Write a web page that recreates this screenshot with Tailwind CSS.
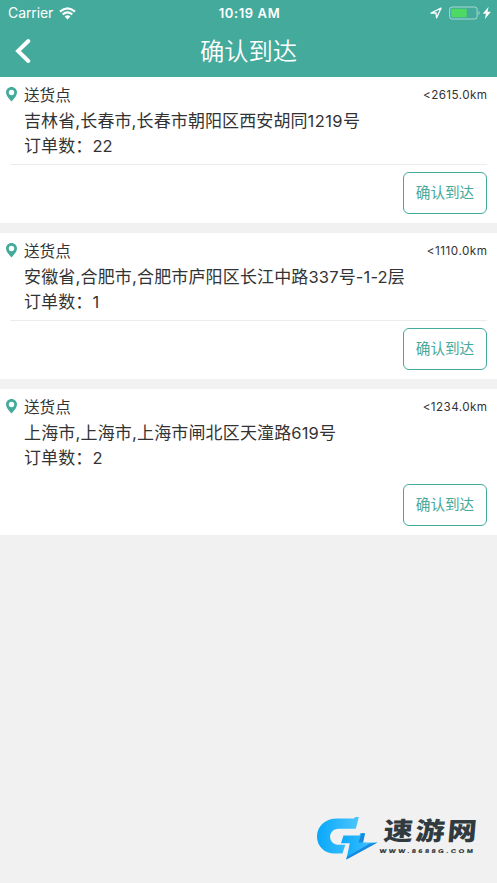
<!DOCTYPE html>
<html lang="zh-CN">
<head>
<meta charset="utf-8">
<title>确认到达</title>
<script src="https://cdn.jsdelivr.net/npm/@tailwindcss/browser@4"></script>
</head>
<body class="bg-[#f1f1f1]">
<div class="relative w-[497px] h-[883px] overflow-hidden bg-[#f1f1f1] font-['Inter','Noto_Sans_CJK_SC',sans-serif] text-[#333]">
  <header class="h-[77px] bg-[#43aa9c] text-white">
    <div class="h-[26px] grid grid-cols-3 items-center pl-2 pr-[6px]">
      <div class="flex items-center gap-[7px]">
        <span class="text-[14px] leading-[26px] tracking-[-0.1px]">Carrier</span>
        <svg class="w-[17px] h-[13px] -ml-px" viewBox="0 0 17 13" fill="none" stroke="#fff" stroke-width="2.3"><path d="M1 4.6Q8.5-1.8 16 4.6M3.7 7.5Q8.5 3.3 13.3 7.5"/><path d="M5.6 9.5Q8.5 7 11.4 9.5L8.5 12.4Z" fill="#fff" stroke="none"/></svg>
      </div>
      <div class="text-center text-[13px] leading-[26px] font-semibold tracking-[0.6px] whitespace-nowrap">10:19 AM</div>
      <div class="flex items-center justify-end">
        <svg class="w-[12px] h-[12px] mr-[7px]" viewBox="0 0 12 12"><path d="M1 6L11 1.2L6.6 10.8L6 6Z" fill="none" stroke="#fff" stroke-width="1.3" stroke-linejoin="round"/></svg>
        <svg class="w-[42px] h-[14px]" viewBox="0 0 42 14"><rect x=".6" y="1" width="27.5" height="12" rx="2.5" fill="none" stroke="#fff" stroke-opacity=".55"/><rect x="2.2" y="2.7" width="15.6" height="8.6" rx="1" fill="#4cd964"/><path d="M29.5 5Q32 7 29.5 9Z" fill="#fff" fill-opacity=".55"/><path d="M39.6 .8L33.8 7.8H37L35.8 13.2L41.8 5.8H38.5Z" fill="#fff"/></svg>
      </div>
    </div>
    <div class="h-[50px] grid grid-cols-[60px_1fr_60px] items-center">
      <svg class="w-[16px] h-[26px] ml-[15px]" viewBox="0 0 16 26"><path d="M13.3 3L3 13L13.3 23" fill="none" stroke="#fff" stroke-width="3.9" stroke-linecap="round" stroke-linejoin="miter"/></svg>
      <h1 class="text-center text-[24.3px] leading-[50px] font-[350]">确认到达</h1>
    </div>
  </header>
  <main class="flex flex-col gap-[10px]">
    <section class="h-[146px] bg-white pt-[6px] px-[10px]">
      <div class="h-[26px] flex items-center -ml-1">
        <svg class="w-[11px] h-[15px] mr-[7px] -mt-[4px]" viewBox="0 0 11 15"><path fill="#43aa9c" fill-rule="evenodd" d="M5.5 0C2.4 0 0 2.4 0 5.5C0 8.4 2.8 11.4 5.5 14.5C8.2 11.4 11 8.4 11 5.5C11 2.4 8.6 0 5.5 0ZM5.5 2.8A2.7 2.7 0 1 1 5.5 8.2A2.7 2.7 0 1 1 5.5 2.8Z"/></svg>
        <span class="text-[15.6px] leading-[26px]">送货点</span>
        <span class="ml-auto -mr-[0.4px] text-[11.7px] leading-[24px] tracking-[0.4px] -mt-[2px]">&lt;2615.0km</span>
      </div>
      <div class="pl-[14px] h-[25px] text-[17px] leading-[25px] tracking-[0.1px] whitespace-nowrap">吉林省,长春市,长春市朝阳区西安胡同<span class="text-[16.5px] tracking-[0.4px]">1219</span>号</div>
      <div class="pl-[14px] h-[25px] text-[17px] leading-[25px] tracking-[0.1px] whitespace-nowrap">订单数：<span class="text-[16.5px]">22</span></div>
      <div class="mt-[5px] h-px bg-[#ececec]"></div>
      <div class="mt-[7px] flex justify-end"><button class="w-[84px] h-[42px] pt-[2px] rounded-[6px] border-[1.5px] border-[#43aa9c] text-[#43aa9c] text-[14.6px]">确认到达</button></div>
    </section>
    <section class="h-[146px] bg-white pt-[6px] px-[10px]">
      <div class="h-[26px] flex items-center -ml-1">
        <svg class="w-[11px] h-[15px] mr-[7px] -mt-[4px]" viewBox="0 0 11 15"><path fill="#43aa9c" fill-rule="evenodd" d="M5.5 0C2.4 0 0 2.4 0 5.5C0 8.4 2.8 11.4 5.5 14.5C8.2 11.4 11 8.4 11 5.5C11 2.4 8.6 0 5.5 0ZM5.5 2.8A2.7 2.7 0 1 1 5.5 8.2A2.7 2.7 0 1 1 5.5 2.8Z"/></svg>
        <span class="text-[15.6px] leading-[26px]">送货点</span>
        <span class="ml-auto -mr-[0.5px] text-[11.7px] leading-[24px] tracking-[0.5px] -mt-[2px]">&lt;1110.0km</span>
      </div>
      <div class="pl-[14px] h-[25px] text-[17px] leading-[25px] tracking-[0.15px] whitespace-nowrap">安徽省,合肥市,合肥市庐阳区长江中路<span class="text-[16.5px]">337</span>号<span class="text-[16.5px]">-1-2</span>层</div>
      <div class="pl-[14px] h-[25px] text-[17px] leading-[25px] tracking-[0.1px] whitespace-nowrap">订单数：<span class="text-[16.5px]">1</span></div>
      <div class="mt-[5px] h-px bg-[#ececec]"></div>
      <div class="mt-[7px] flex justify-end"><button class="w-[84px] h-[42px] pt-[2px] rounded-[6px] border-[1.5px] border-[#43aa9c] text-[#43aa9c] text-[14.6px]">确认到达</button></div>
    </section>
    <section class="h-[146px] bg-white pt-[6px] px-[10px]">
      <div class="h-[26px] flex items-center -ml-1">
        <svg class="w-[11px] h-[15px] mr-[7px] -mt-[4px]" viewBox="0 0 11 15"><path fill="#43aa9c" fill-rule="evenodd" d="M5.5 0C2.4 0 0 2.4 0 5.5C0 8.4 2.8 11.4 5.5 14.5C8.2 11.4 11 8.4 11 5.5C11 2.4 8.6 0 5.5 0ZM5.5 2.8A2.7 2.7 0 1 1 5.5 8.2A2.7 2.7 0 1 1 5.5 2.8Z"/></svg>
        <span class="text-[15.6px] leading-[26px]">送货点</span>
        <span class="ml-auto -mr-[0.4px] text-[11.7px] leading-[24px] tracking-[0.4px] -mt-[2px]">&lt;1234.0km</span>
      </div>
      <div class="pl-[14px] h-[25px] text-[17px] leading-[25px] tracking-[0.15px] whitespace-nowrap">上海市,上海市,上海市闸北区天潼路<span class="text-[16.5px]">619</span>号</div>
      <div class="pl-[14px] h-[25px] text-[17px] leading-[25px] tracking-[0.1px] whitespace-nowrap">订单数：<span class="text-[16.5px]">2</span></div>
      <div class="mt-[13px] flex justify-end"><button class="w-[84px] h-[42px] pt-[2px] rounded-[6px] border-[1.5px] border-[#43aa9c] text-[#43aa9c] text-[14.6px]">确认到达</button></div>
    </section>
  </main>
  <svg class="absolute left-[310px] top-[810px] w-[187px] h-[60px]" viewBox="0 0 187 60">
    <defs><linearGradient id="g" x1="0" y1="0" x2="1" y2="0"><stop offset="0" stop-color="#08a8fc"/><stop offset="1" stop-color="#4cc5fb"/></linearGradient></defs>
    <path d="M44 8.5L45.2 7H48.9L45.8 18.7H29C23 18.7 19.5 23 20.2 28C20.6 31.5 23.5 34.2 27.5 34.8H35.3L32.5 43.5H25C14 43.5 7 36 7 26.5C7 16 15.5 8.5 27 8.5Z" fill="url(#g)"/>
    <path d="M33.5 25.5H49.5L50.2 23.3H55L53 32.5H67.5L36.3 49.5L39.8 33.3H31Z" fill="url(#g)"/>
    <path d="M51.5 23.3H55L53 32.5H48.5Z" fill="#1689df"/>
    <path d="M67.5 32.5L36.3 49.5L37 46.7L60 33.5Z" fill="#1689df"/>
    <text transform="translate(73 30.3) skewX(-5) scale(1.17 1)" font-family="'Noto Sans CJK SC',sans-serif" font-size="25" font-weight="900" fill="#303a3f" textLength="79.5" lengthAdjust="spacing">速游网</text>
    <text transform="translate(69.5 43.3) skewX(-5) scale(1.35 1)" font-family="'Liberation Sans',sans-serif" font-size="5.3" font-weight="700" fill="#222b2f" stroke="#222b2f" stroke-width=".15" textLength="69">WWW.8688G.COM</text>
  </svg>
</div>
</body>
</html>
